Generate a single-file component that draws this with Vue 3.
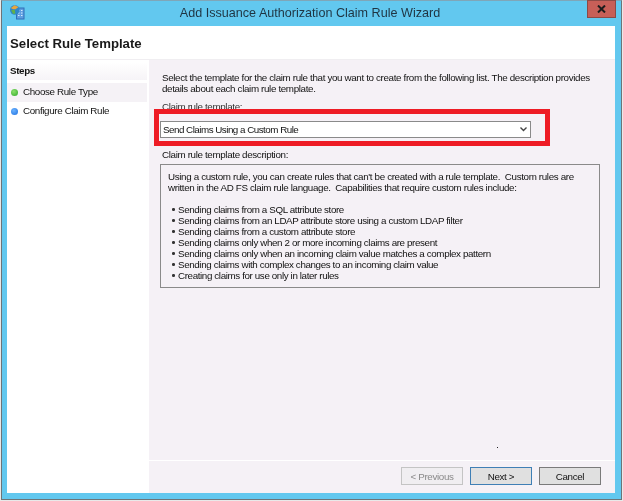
<script setup>
const introLines = [
  'Select the template for the claim rule that you want to create from the following list. The description provides',
  'details about each claim rule template.'
]
const descLines = [
  "Using a custom rule, you can create rules that can't be created with a rule template.  Custom rules are",
  'written in the AD FS claim rule language.  Capabilities that require custom rules include:'
]
const bullets = [
  'Sending claims from a SQL attribute store',
  'Sending claims from an LDAP attribute store using a custom LDAP filter',
  'Sending claims from a custom attribute store',
  'Sending claims only when 2 or more incoming claims are present',
  'Sending claims only when an incoming claim value matches a complex pattern',
  'Sending claims with complex changes to an incoming claim value',
  'Creating claims for use only in later rules'
]
</script>

<template>
  <div class="screen">
    <div class="window">
      <div class="titlebar">
        <svg class="appicon" width="15" height="15" viewBox="0 0 15 15">
          <rect x="6.5" y="3" width="7.5" height="11" fill="#5f9ee0" stroke="#2f6fb8" stroke-width="1"/>
          <path d="M8 5.5h1.5M11 5.5h1.5M8 8h1.5M11 8h1.5M8 10.5h1.5M11 10.5h1.5" stroke="#d7ecff" stroke-width="1"/>
          <circle cx="4.8" cy="5" r="4.8" fill="#2f86c9"/>
          <path d="M0.8 3 L4.5 0.3 L8.5 2 L5.5 4.2 L3 4.2 Z" fill="#e9a53c"/>
          <path d="M1.2 5 L4.8 5 L5.4 8.6 L3 9 Z" fill="#62b04a"/>
        </svg>
        <span class="title">Add Issuance Authorization Claim Rule Wizard</span>
        <div class="close">
          <svg width="9" height="8" viewBox="0 0 9 8"><path d="M1 0.5 L8 7.5 M8 0.5 L1 7.5" stroke="#1c1c1c" stroke-width="2"/></svg>
        </div>
      </div>
      <div class="content">
        <div class="header">Select Rule Template</div>
        <div class="body">
          <aside class="steps">
            <div class="steps-title">Steps</div>
            <div class="step active"><span class="dot green"></span><span class="step-text">Choose Rule Type</span></div>
            <div class="step"><span class="dot blue"></span><span class="step-text">Configure Claim Rule</span></div>
          </aside>
          <main class="main">
            <div class="pane">
              <p class="intro">
                <span v-for="l in introLines" :key="l" class="line">{{ l }}</span>
              </p>
              <div class="label first">Claim rule template:</div>
              <div class="select">
                <span>Send Claims Using a Custom Rule</span>
                <svg width="7" height="5" viewBox="0 0 7 5"><path d="M0.5 0.5 L3.5 3.5 L6.5 0.5" fill="none" stroke="#444" stroke-width="1.4"/></svg>
              </div>
              <div class="label second">Claim rule template description:</div>
              <div class="desc">
                <p><span v-for="l in descLines" :key="l" class="line">{{ l }}</span></p>
                <ul>
                  <li v-for="b in bullets" :key="b">{{ b }}</li>
                </ul>
              </div>
              <span class="speck"></span>
              <div class="highlight"></div>
            </div>
            <div class="footer">
              <button class="btn disabled">&lt; Previous</button>
              <button class="btn primary">Next &gt;</button>
              <button class="btn">Cancel</button>
            </div>
          </main>
        </div>
      </div>
    </div>
  </div>
</template>

<style>
html, body { margin: 0; background: #fff; overflow: hidden; }
</style>

<style scoped>
.screen {
  width: 623px;
  height: 501px;
  box-sizing: border-box;
  padding: 0 1px 0 1px;
  font-family: "Liberation Sans", Arial, sans-serif;
  font-size: 9.8px;
  letter-spacing: -0.35px;
  color: #111;
  background: #e9e9e9;
}
.window {
  height: 500px;
  box-sizing: border-box;
  background: #62c8ef;
  border: 1px solid #6d7478;
  border-top-color: #7fa6b8;
  padding: 0 6px 6px 5px;
  display: flex;
  flex-direction: column;
  filter: blur(0.3px);
}
.titlebar {
  height: 25px;
  flex: none;
  display: flex;
  align-items: center;
  justify-content: center;
  position: relative;
}
.appicon { position: absolute; left: 3px; top: 4px; }
.title { font-size: 12.6px; letter-spacing: 0; color: #1f3442; margin-top: -1px; margin-right: 2px; }
.close {
  position: absolute;
  right: -1px;
  top: -1px;
  width: 29px;
  height: 18px;
  background: #c75f58;
  border: 1px solid #8c4a46;
  box-sizing: border-box;
  display: flex;
  align-items: center;
  justify-content: center;
}
.content {
  flex: 1;
  background: #fff;
  display: flex;
  flex-direction: column;
  min-height: 0;
}
.header {
  height: 34px;
  flex: none;
  box-sizing: border-box;
  padding: 10px 0 0 3px;
  font-size: 13.2px;
  letter-spacing: 0;
  font-weight: 700;
  color: #1a1a1a;
  border-bottom: 1px solid #f0eef1;
}
.body { flex: 1; display: flex; min-height: 0; }
.steps { width: 142px; flex: none; box-sizing: border-box; padding-top: 2px; }
.steps-title {
  height: 18px;
  padding: 3px 0 0 3px;
  box-sizing: border-box;
  font-weight: 700;
  background: linear-gradient(#fff, #f6f4f7);
  margin-right: 2px;
}
.step {
  height: 19px;
  display: flex;
  align-items: center;
  padding-left: 4px;
  margin-right: 2px;
}
.step-text { margin-bottom: 3px; }
.step .dot { margin-bottom: 1px; }
.step.active { background: #f5f2f6; margin-top: 3px; }
.dot { width: 7px; height: 7px; border-radius: 50%; margin-right: 5px; flex: none; }
.green { background: radial-gradient(circle at 40% 35%, #8be06a, #2fa82a); }
.blue { background: radial-gradient(circle at 40% 35%, #6db4ff, #1b6fe0); }
.main {
  flex: 1;
  min-width: 0;
  display: flex;
  flex-direction: column;
  background: #f5f1f6;
}
.pane { flex: 1; position: relative; padding: 12px 0 0 11px; min-height: 0; }
.line { display: block; white-space: pre; }
.intro { margin: 0; line-height: 11px; padding-left: 2px; }
.label { line-height: 12px; padding-left: 2px; }
.label.first { margin-top: 7px; color: #333; }
.label.second { margin-top: 11px; }
.select {
  margin-top: 8px;
  width: 371px;
  height: 17px;
  box-sizing: border-box;
  background: #fff;
  border: 1px solid #8a8a8a;
  display: flex;
  align-items: center;
  justify-content: space-between;
  padding: 0 3px 0 2px;
  color: #111;
  letter-spacing: -0.5px;
}
.desc {
  margin-top: 3px;
  width: 440px;
  height: 124px;
  box-sizing: border-box;
  border: 1px solid #8a8a8a;
  padding: 6px 0 0 7px;
  line-height: 11px;
}
.desc p { margin: 0; }
.desc ul { margin: 11px 0 0; padding: 0 0 0 10px; list-style: none; }
.desc li { position: relative; white-space: nowrap; letter-spacing: -0.38px; }
.desc li::before {
  content: "";
  position: absolute;
  left: -6px;
  top: 4px;
  width: 2.5px;
  height: 2.5px;
  border-radius: 50%;
  background: #333;
}
.highlight {
  position: absolute;
  left: 5px;
  top: 49px;
  width: 396px;
  height: 37px;
  box-sizing: border-box;
  border: 5px solid #ee1c25;
}
.speck {
  position: absolute;
  left: 348px;
  top: 387px;
  width: 1px;
  height: 1px;
  background: #222;
}
.footer {
  height: 33px;
  flex: none;
  box-sizing: border-box;
  border-top: 1px solid #fff;
  display: flex;
  justify-content: flex-end;
  align-items: flex-start;
  gap: 7px;
  padding: 6px 14px 0 0;
}
.btn {
  width: 62px;
  height: 18px;
  box-sizing: border-box;
  padding: 0;
  font: inherit;
  letter-spacing: inherit;
  color: #111;
  background: #e0e0e0;
  border: 1px solid #7a7a7a;
}
.btn.primary { border-color: #3f7fb5; }
.btn.disabled { background: #f0eef1; border-color: #c4c4c4; color: #8a8a8a; }
</style>
